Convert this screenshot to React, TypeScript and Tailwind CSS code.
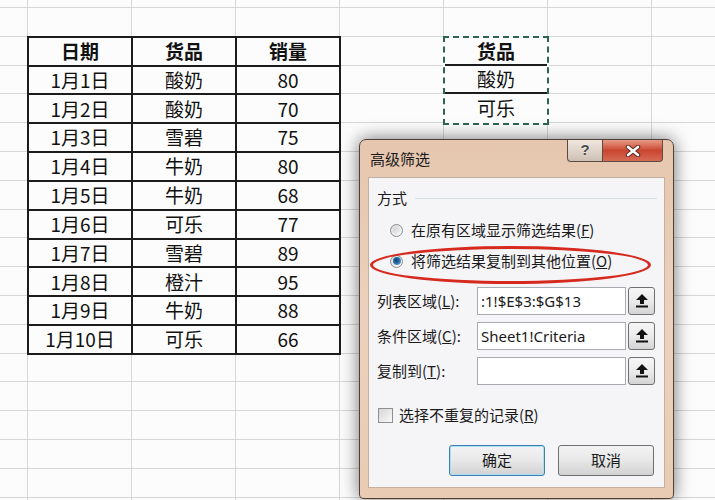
import React from 'react';

const cjk = "font-['Noto_Sans_CJK_SC',sans-serif]";

const sales = [
  ['1月1日', '酸奶', '80'],
  ['1月2日', '酸奶', '70'],
  ['1月3日', '雪碧', '75'],
  ['1月4日', '牛奶', '80'],
  ['1月5日', '牛奶', '68'],
  ['1月6日', '可乐', '77'],
  ['1月7日', '雪碧', '89'],
  ['1月8日', '橙汁', '95'],
  ['1月9日', '牛奶', '88'],
  ['1月10日', '可乐', '66'],
];

// 背景网格单元格数量 (8列 x 19行)
const bgCells = Array.from({ length: 8 * 19 });

function PickIcon() {
  return (
    <svg width="12" height="14" viewBox="0 0 12 14">
      <path d="M6 0 L12 6 H8 V10 H4 V6 H0 Z" fill="#111" />
      <rect x="0" y="11.5" width="12" height="2" fill="#111" />
    </svg>
  );
}

function RangeField({ label, hotkey, rest, value }: { label: string; hotkey: string; rest: string; value: string }) {
  return (
    <div className="flex items-center h-[28px] mt-[7px] first:mt-[16px] pl-[8px]">
      <div className="w-[100px] text-[15px] text-[#1a1a1a]">
        {label}(<u>{hotkey}</u>){rest}
      </div>
      <div className="w-[149px] h-full bg-white border border-[#a9abb3] flex items-center pl-[3px] text-[15px] text-[#1a1a1a] font-['Noto_Sans','Noto_Sans_CJK_SC',sans-serif] overflow-hidden whitespace-nowrap">
        {value}
      </div>
      <button className="ml-[2px] w-[27px] h-full rounded-[3px] border border-[#707070] bg-gradient-to-b from-[#f6f6f6] via-[#ebebeb] to-[#d4d4d4] flex items-center justify-center">
        <PickIcon />
      </button>
    </div>
  );
}

function Radio({ checked }: { checked?: boolean }) {
  return (
    <div className="w-[13px] h-[13px] rounded-full border border-[#8c8e90] bg-gradient-to-br from-[#d8d8d8] to-[#fbfbfb] flex items-center justify-center">
      {checked ? (
        <div className="w-[8px] h-[8px] rounded-full bg-[radial-gradient(circle_at_40%_40%,#0e3c68_0%,#2a6fa8_45%,#8cc3e8_100%)]" />
      ) : (
        <div className="w-[7px] h-[7px] rounded-full bg-gradient-to-br from-[#cfcfcf] to-[#f4f4f4]" />
      )}
    </div>
  );
}

export default function App() {
  return (
    <div className={`relative w-[715px] h-[500px] overflow-hidden bg-[#fcfcfc] ${cjk}`}>
      {/* 工作表网格 */}
      <div className="grid grid-cols-[28px_repeat(7,104px)] grid-rows-[8px_repeat(18,28.8px)]">
        {/* 数据表 */}
        <div className="col-start-2 col-span-3 row-start-3 row-span-11 -ml-px -mt-px w-[314px] h-[319px] border-l-2 border-t-2 border-[#1c1c1c] grid grid-cols-3 grid-rows-11 bg-[#fcfcfc] z-10">
          {['日期', '货品', '销量'].map((h) => (
            <div key={h} className="border-r-2 border-b-2 border-[#1c1c1c] flex items-center justify-center text-[19px] font-bold text-[#111]">
              {h}
            </div>
          ))}
          {sales.map((row) =>
            row.map((cell, i) => (
              <div key={row[0] + i} className="border-r-2 border-b-2 border-[#1c1c1c] flex items-center justify-center text-[19px] text-[#111]">
                {cell}
              </div>
            ))
          )}
        </div>

        {/* 条件区域 */}
        <div className="col-start-6 row-start-3 row-span-3 -ml-px -mt-px w-[106px] h-[89px] border-2 border-dashed border-[#2c6553] grid grid-rows-3 bg-[#fcfcfc] z-10">
          <div className="border-b-2 border-[#1c1c1c] flex items-center justify-center text-[19px] font-bold text-[#111]">货品</div>
          <div className="border-b-2 border-[#1c1c1c] flex items-center justify-center text-[19px] text-[#111]">酸奶</div>
          <div className="flex items-center justify-center text-[19px] text-[#111]">可乐</div>
        </div>

        {bgCells.map((_, i) => (
          <div key={i} className="border-r border-b border-[#d6d6d6]" />
        ))}
      </div>

      {/* 高级筛选 对话框 */}
      <div className="absolute left-[359px] top-[139px] w-[315px] h-[360px] z-20 rounded-t-[7px] rounded-b-[4px] border border-[#4e4038] bg-gradient-to-b from-[#e6c6ae] via-[#ebd1bd] to-[#e9cbb3] px-[8px] shadow-[0_0_18px_rgba(0,0,0,0.55)] flex flex-col">
        <div className="h-[37px] flex items-start">
          <div className="mt-[8px] ml-[2px] text-[15px] text-[#1a1a1a]">高级筛选</div>
          <div className="ml-auto mr-[2px] flex">
            <div className="w-[36px] h-[22px] rounded-bl-[4px] border border-t-0 border-[#5b4c43] bg-gradient-to-b from-[#efe6de] via-[#e0d4ca] to-[#cdbfb3] flex items-center justify-center text-[15px] font-bold text-[#4a4a4a] font-['Liberation_Sans',sans-serif] [text-shadow:0_0_2px_#fff]">
              ?
            </div>
            <div className="w-[60px] h-[22px] rounded-br-[4px] border border-l-0 border-t-0 border-[#5b4c43] bg-gradient-to-b from-[#e79a86] via-[#c94530] to-[#d86a55] flex items-center justify-center">
              <svg width="16" height="12" viewBox="0 0 16 12">
                <path d="M3 2 L13 10 M13 2 L3 10" stroke="#5a2a22" strokeWidth="4.5" strokeLinecap="round" />
                <path d="M3 2 L13 10 M13 2 L3 10" stroke="#fff" strokeWidth="2.6" strokeLinecap="round" />
              </svg>
            </div>
          </div>
        </div>

        <div className="h-[311px] border border-[#c3b0a1] bg-[#f5f4f7] flex flex-col text-[15px] text-[#1a1a1a]">
          <div className="pt-[10px] pl-[8px] flex items-center h-[30px]">
            <span className="leading-[20px]">方式</span>
            <div className="flex-1 h-px bg-[#d9dee3] ml-[8px] mr-[7px]" />
          </div>
          <div className="mt-[12px] h-[20px] pl-[21px] flex items-center">
            <Radio />
            <span className="ml-[8px]">在原有区域显示筛选结果(<u>F</u>)</span>
          </div>
          <div className="mt-[11px] h-[20px] pl-[21px] flex items-center">
            <Radio checked />
            <span className="ml-[8px]">将筛选结果复制到其他位置(<u>O</u>)</span>
          </div>

          <div className="flex flex-col">
            <RangeField label="列表区域" hotkey="L" rest=":" value=":1!$E$3:$G$13" />
            <RangeField label="条件区域" hotkey="C" rest=":" value="Sheet1!Criteria" />
            <RangeField label="复制到" hotkey="T" rest=":" value="" />
          </div>

          <div className="mt-[23px] pl-[9px] flex items-center h-[15px]">
            <div className="w-[15px] h-[15px] border border-[#8f8f8f] bg-gradient-to-br from-[#d6d6d6] to-[#fafafa]" />
            <span className="ml-[6px]">选择不重复的记录(<u>R</u>)</span>
          </div>

          <div className="mt-[22px] pl-[80px] flex gap-[13px]">
            <button className="w-[96px] h-[31px] rounded-[3px] border border-[#3c7fb1] shadow-[inset_0_0_0_1px_#a9e0f5] bg-gradient-to-b from-[#f3f3f3] via-[#e8e8e8] to-[#d2d2d2] text-[15px] text-[#1a1a1a]">
              确定
            </button>
            <button className="w-[96px] h-[31px] rounded-[3px] border border-[#707070] bg-gradient-to-b from-[#f3f3f3] via-[#e8e8e8] to-[#d2d2d2] text-[15px] text-[#1a1a1a]">
              取消
            </button>
          </div>
        </div>

        {/* 红色标注圈 */}
        <div className="absolute left-[10px] top-[106px] w-[281px] h-[38px] rounded-[50%] border-[3px] border-[#d62a1f]" />
      </div>
    </div>
  );
}
